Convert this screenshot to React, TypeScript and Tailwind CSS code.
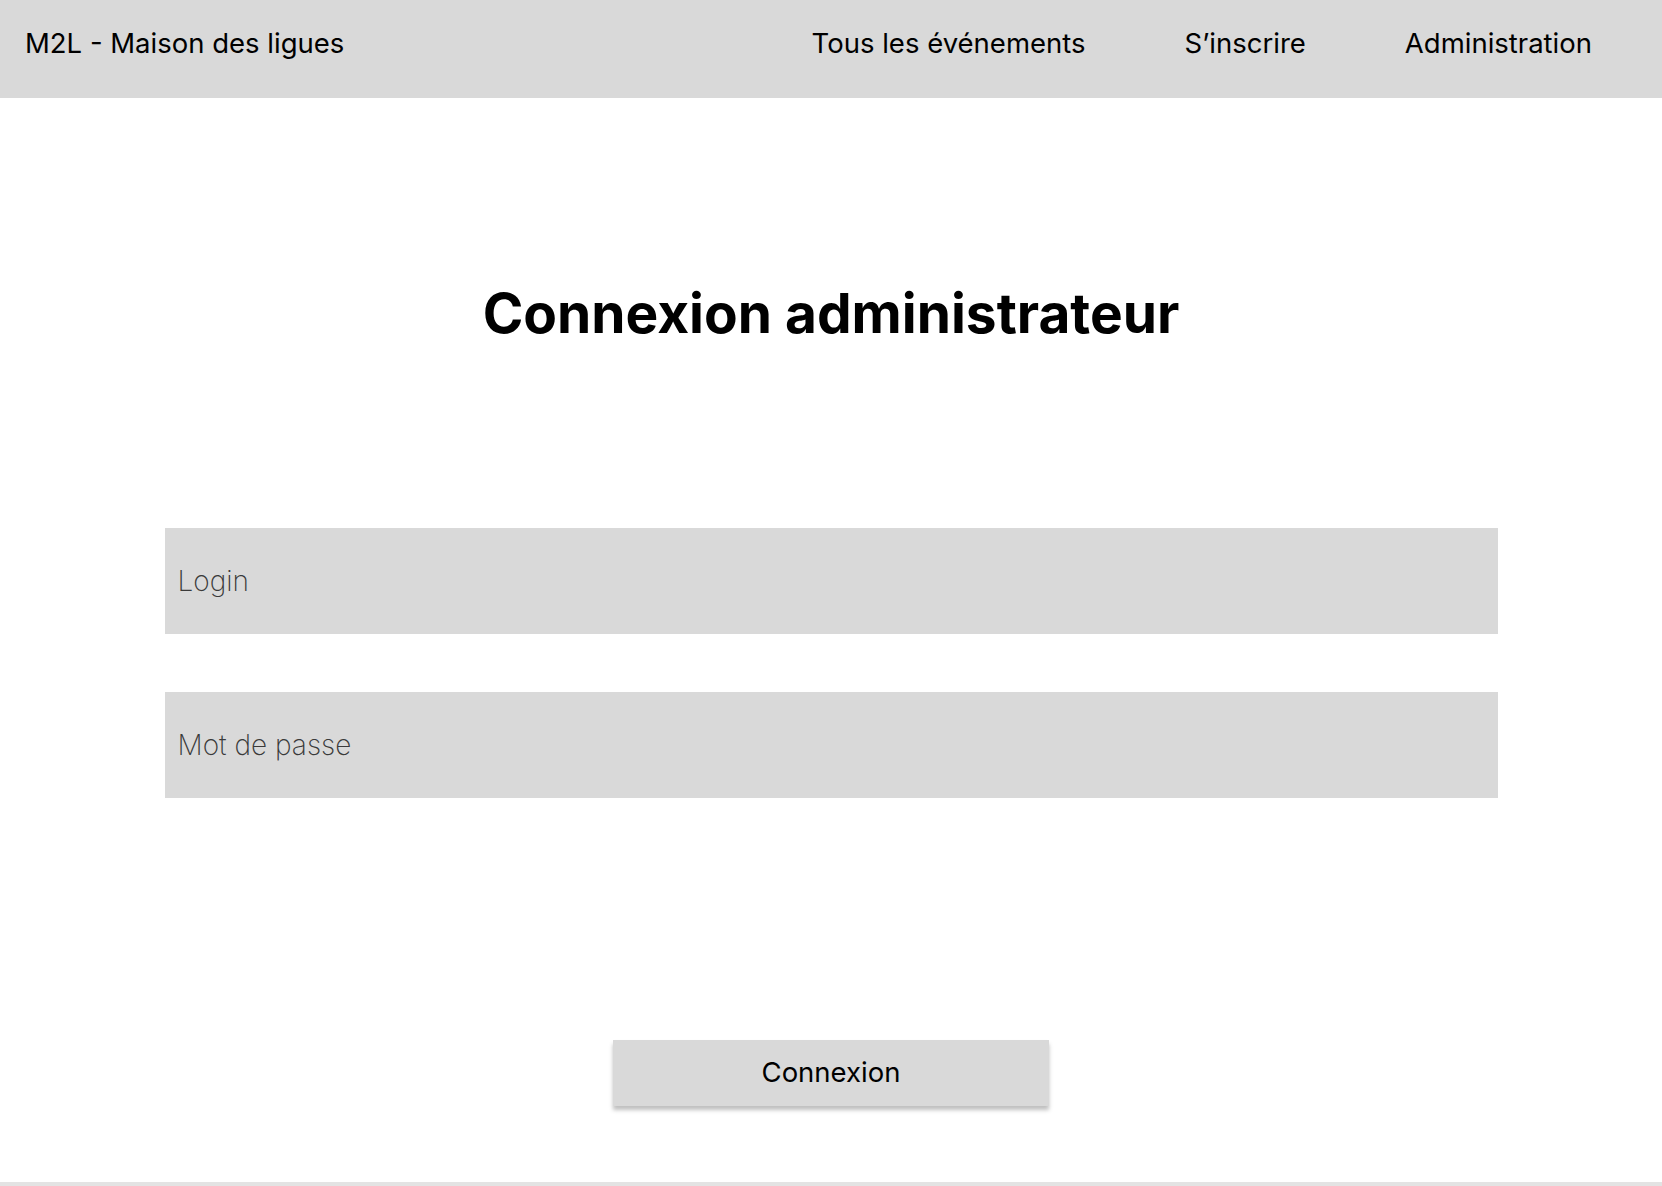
import { useState } from 'react';

const navLinks = ['Tous les événements', 'S’inscrire', 'Administration'];

export default function App() {
  const [login, setLogin] = useState('');
  const [password, setPassword] = useState('');

  return (
    <div className="flex h-[1186px] flex-col bg-white font-['Inter',sans-serif] text-black">
      <header className="flex h-[98px] shrink-0 items-start justify-between bg-[#d9d9d9] pl-[25px] pr-[70px] pt-[26px]">
        <div className="text-[27.5px] leading-[34px]">M2L - Maison des ligues</div>
        <nav className="flex gap-[99px]">
          {navLinks.map((link) => (
            <a key={link} href="#" className="text-[27.5px] leading-[34px] text-black">
              {link}
            </a>
          ))}
        </nav>
      </header>

      <main className="flex flex-1 flex-col items-center">
        <h1 className="mt-[188px] text-[55px] font-bold leading-none">Connexion administrateur</h1>

        <form className="mt-[187px] flex w-[1333px] flex-col gap-[58px]" onSubmit={(e) => e.preventDefault()}>
          <input
            type="text"
            value={login}
            onChange={(e) => setLogin(e.target.value)}
            placeholder="Login"
            className="h-[106px] w-full bg-[#d9d9d9] px-[13px] text-[28px] font-[150] outline-none placeholder:text-[#3a3a3a] placeholder:opacity-100"
          />
          <input
            type="password"
            value={password}
            onChange={(e) => setPassword(e.target.value)}
            placeholder="Mot de passe"
            className="h-[106px] w-full bg-[#d9d9d9] px-[13px] text-[28px] font-[150] outline-none placeholder:text-[#3a3a3a] placeholder:opacity-100"
          />
        </form>

        <button className="mt-[242px] h-[66px] w-[436px] bg-[#d9d9d9] text-[27.5px] shadow-[0_4px_4px_rgba(0,0,0,0.25)]">
          Connexion
        </button>
      </main>

      <footer className="h-[4px] shrink-0 bg-[#e3e3e3]" />
    </div>
  );
}
